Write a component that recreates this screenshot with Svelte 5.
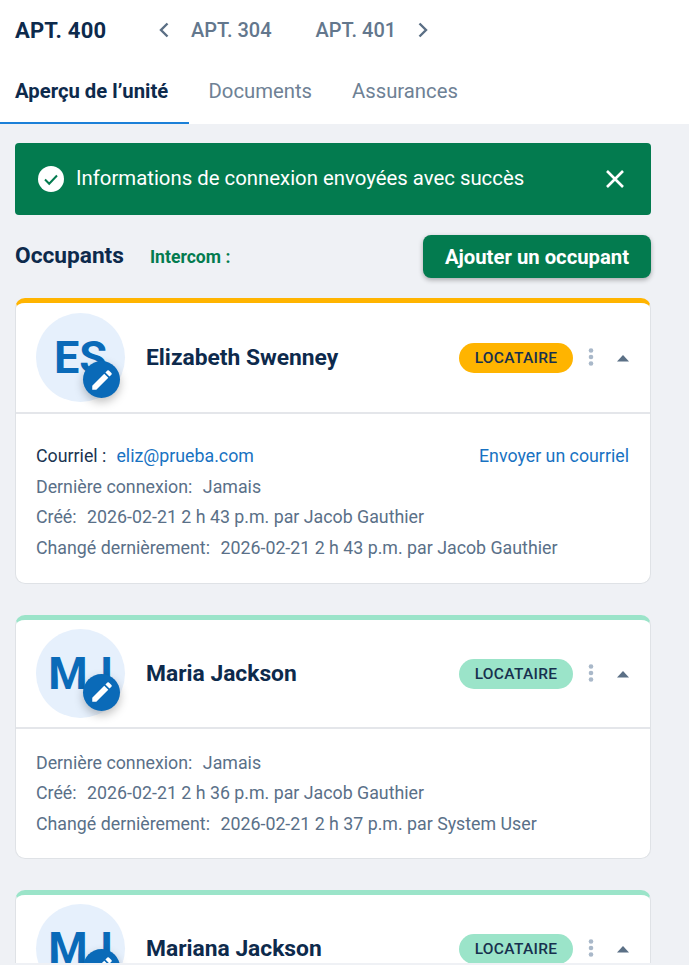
<script>
  const occupants = [
    {
      initials: 'ES',
      name: 'Elizabeth Swenney',
      tone: 'amber',
      email: 'eliz@prueba.com',
      lines: [
        ['Dernière connexion:', 'Jamais'],
        ['Créé:', '2026-02-21 2 h 43 p.m. par Jacob Gauthier'],
        ['Changé dernièrement:', '2026-02-21 2 h 43 p.m. par Jacob Gauthier']
      ]
    },
    {
      initials: 'MJ',
      name: 'Maria Jackson',
      tone: 'mint',
      lines: [
        ['Dernière connexion:', 'Jamais'],
        ['Créé:', '2026-02-21 2 h 36 p.m. par Jacob Gauthier'],
        ['Changé dernièrement:', '2026-02-21 2 h 37 p.m. par System User']
      ]
    },
    { initials: 'MJ', name: 'Mariana Jackson', tone: 'mint', lines: [] }
  ]
</script>

<div class="page">
  <header class="top">
    <div class="unit-nav">
      <span class="current">APT. 400</span>
      <svg class="chev first" width="12" height="16" viewBox="0 0 12 16"><path d="M9.5 1.5 3 8l6.5 6.5" /></svg>
      <span class="other">APT. 304</span>
      <span class="other second">APT. 401</span>
      <svg class="chev last" width="12" height="16" viewBox="0 0 12 16"><path d="M2.5 1.5 9 8l-6.5 6.5" /></svg>
    </div>
    <nav class="tabs">
      <span class="tab active">Aperçu de l’unité</span>
      <span class="tab">Documents</span>
      <span class="tab">Assurances</span>
    </nav>
  </header>

  <main class="content">
    <div class="alert">
      <svg width="26" height="26" viewBox="0 0 26 26">
        <circle cx="13" cy="13" r="13" fill="#fff" />
        <path d="M7 13.5l4.2 4.2L19 9.5" fill="none" stroke="#037b4f" stroke-width="2" />
      </svg>
      <span class="alert-text">Informations de connexion envoyées avec succès</span>
      <svg class="close" width="20" height="20" viewBox="0 0 20 20">
        <path d="M2 2l16 16M18 2 2 18" fill="none" stroke="#fff" stroke-width="2.6" />
      </svg>
    </div>

    <div class="section-head">
      <h2>Occupants</h2>
      <span class="intercom">Intercom :</span>
      <button class="add">Ajouter un occupant</button>
    </div>

    {#each occupants as o}
      <article class="card {o.tone}">
        <div class="card-head">
          <div class="avatar">
            <span>{o.initials}</span>
            <div class="edit">
              <svg width="26" height="26" viewBox="0 0 24 24">
                <path fill="#fff" d="M3 17.25V21h3.75L17.81 9.94l-3.75-3.75L3 17.25zM20.71 7.04a1 1 0 0 0 0-1.41l-2.34-2.34a1 1 0 0 0-1.41 0l-1.83 1.83 3.75 3.75 1.83-1.83z" />
              </svg>
            </div>
          </div>
          <div class="name">{o.name}</div>
          <span class="badge">LOCATAIRE</span>
          <svg class="dots" width="6" height="20" viewBox="0 0 6 20">
            <circle cx="3" cy="3.5" r="2.3" />
            <circle cx="3" cy="10" r="2.3" />
            <circle cx="3" cy="16.5" r="2.3" />
          </svg>
          <svg class="caret" width="12" height="7" viewBox="0 0 12 7"><path d="M6 0l6 6.5H0z" /></svg>
        </div>
        {#if o.lines.length}
          <div class="card-body" class:with-email={o.email}>
            {#if o.email}
              <div class="row email-row">
                <span class="label">Courriel :</span>
                <span class="link email">{o.email}</span>
                <span class="link send">Envoyer un courriel</span>
              </div>
            {/if}
            {#each o.lines as line}
              <div class="row"><span class="muted">{line[0]}</span><span class="muted value">{line[1]}</span></div>
            {/each}
          </div>
        {/if}
      </article>
    {/each}
  </main>
</div>

<style>
  :global(body) {
    margin: 0;
    background: #eff1f5;
  }

  .page {
    height: 963px;
    overflow: hidden;
    font-family: Roboto, "Liberation Sans", sans-serif;
    color: #0f2a4a;
    background: #eff1f5;
  }

  .top {
    background: #fff;
    height: 124px;
    box-sizing: border-box;
  }

  .unit-nav {
    display: flex;
    align-items: center;
    height: 60px;
    padding-left: 15px;
  }

  .current {
    font-size: 22px;
    font-weight: 700;
    color: #0d2a4c;
    width: 143px;
    letter-spacing: 0.2px;
  }

  .chev {
    fill: none;
    stroke: #5b6f85;
    stroke-width: 2.4;
  }

  .chev.first {
    margin-right: 21px;
  }

  .chev.last {
    margin-left: 21px;
  }

  .other {
    font-size: 20px;
    font-weight: 500;
    color: #63778d;
  }

  .other.second {
    margin-left: 44px;
  }

  .tabs {
    display: flex;
    height: 64px;
  }

  .tab {
    box-sizing: border-box;
    height: 64px;
    padding: 18px 20px 0;
    font-size: 20.3px;
    color: #6e8195;
    line-height: 26px;
  }

  .tab.active {
    padding: 18px 20px 0 15px;
    width: 188.5px;
    font-weight: 700;
    color: #0d2a4c;
    border-bottom: 2px solid #1b80d8;
    white-space: nowrap;
  }

  .content {
    padding: 19px 38px 0 15px;
  }

  .alert {
    display: flex;
    align-items: center;
    height: 72px;
    box-sizing: border-box;
    padding: 0 26px 0 23px;
    background: #037b4f;
    border-radius: 4px;
    color: #fff;
  }

  .alert-text {
    font-size: 20.35px;
    margin-left: 12px;
    margin-top: -3px;
    flex: 1;
  }

  .section-head {
    display: flex;
    align-items: center;
    margin-top: 20px;
    height: 43px;
  }

  h2 {
    margin: -3px 0 0;
    font-size: 22.7px;
    font-weight: 700;
    color: #0d2a4c;
  }

  .intercom {
    margin-left: 26px;
    margin-top: 1px;
    font-size: 17.6px;
    font-weight: 700;
    color: #037b4f;
    flex: 1;
  }

  .add {
    width: 228px;
    height: 43px;
    border: 0;
    border-radius: 8px;
    background: #037b4f;
    color: #fff;
    font-family: inherit;
    font-size: 20.3px;
    font-weight: 700;
    box-shadow: 0 2px 5px rgba(0, 0, 0, 0.3);
  }

  .card {
    margin-top: 20px;
    margin-bottom: 31px;
    background: #fff;
    border: 1px solid #dfe2e6;
    border-top: 5px solid;
    border-radius: 10px;
  }

  .card.amber {
    border-top-color: #ffb400;
  }

  .card.mint {
    border-top-color: #9be4c9;
  }

  .card + .card {
    margin-top: 0;
  }

  .card-head {
    display: flex;
    align-items: center;
    height: 107px;
    padding: 0 20px;
  }

  .amber .card-head {
    height: 109px;
  }

  .avatar {
    position: relative;
    width: 89px;
    height: 89px;
    flex: none;
    border-radius: 50%;
    background: #e6f0fc;
    color: #0a6ab8;
    font-size: 45px;
    font-weight: 700;
    line-height: 89px;
    text-align: center;
  }

  .edit {
    position: absolute;
    left: 47px;
    top: 45px;
    width: 37px;
    height: 37px;
    border-radius: 50%;
    background: #0a6ab8;
    display: flex;
    align-items: center;
    justify-content: center;
    box-shadow: 0 4px 10px rgba(0, 0, 0, 0.25);
  }

  .amber .edit {
    top: 48px;
  }

  .name {
    flex: 1;
    margin-left: 21px;
    font-size: 22.8px;
    font-weight: 700;
    color: #0d2a4c;
  }

  .badge {
    width: 114px;
    height: 30px;
    line-height: 30px;
    margin-top: 1px;
    text-align: center;
    border-radius: 15px;
    font-size: 15.5px;
    font-weight: 500;
    letter-spacing: 0.3px;
    color: #17304e;
  }

  .amber .badge {
    background: #ffb400;
  }

  .mint .badge {
    background: #9be4c9;
  }

  .dots {
    margin-left: 15px;
    margin-top: -1px;
    fill: #a9b8c9;
  }

  .caret {
    margin-left: 23px;
    margin-right: 1px;
    margin-top: 2px;
    fill: #5b7086;
  }

  .card-body {
    border-top: 2px solid #e4e6ea;
    padding: 20px 20px 17px;
    font-size: 17.8px;
  }

  .card-body.with-email {
    padding-top: 28px;
    padding-bottom: 18px;
  }

  .row {
    display: flex;
    height: 30.7px;
    line-height: 27px;
  }

  .muted {
    color: #5a7088;
  }

  .value {
    margin-left: 10.5px;
  }

  .label {
    color: #1a3350;
  }

  .email {
    margin-left: 10px;
    flex: 1;
  }

  .send {
    margin-right: 1px;
  }

  .link {
    color: #1872c2;
  }
</style>
